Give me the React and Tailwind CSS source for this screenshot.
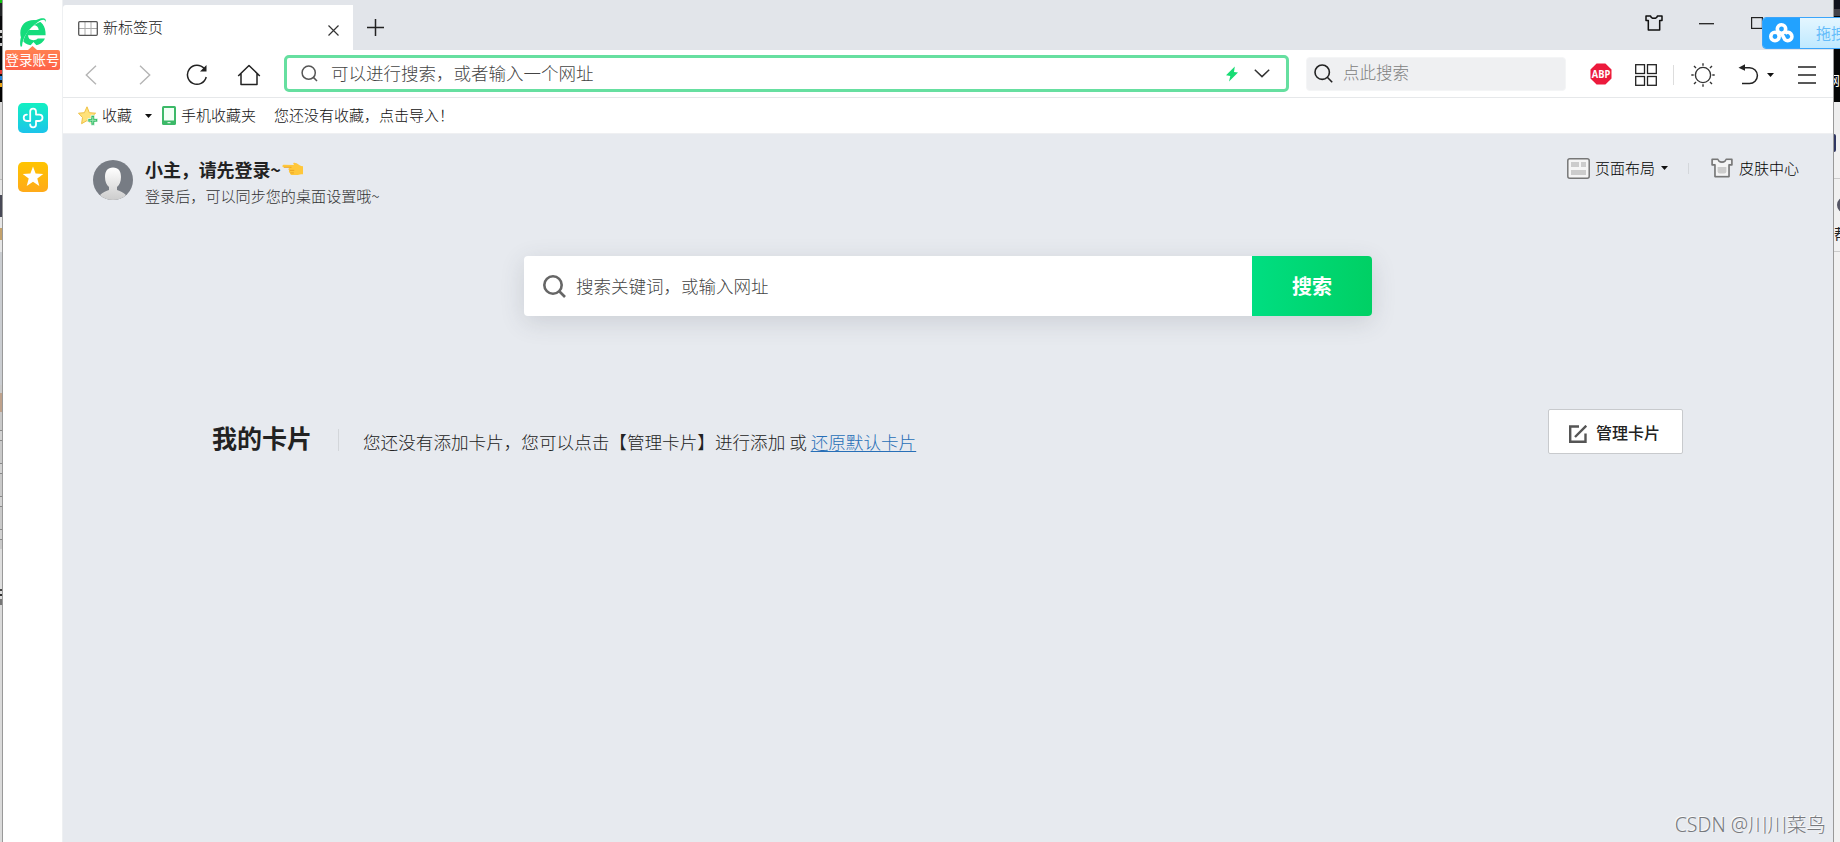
import React from 'react';

const Caret = () => (
  <svg className="w-[7px] h-[4px] shrink-0" viewBox="0 0 7 4"><path d="M0 0h7L3.5 4z" fill="#111" /></svg>
);

const Shirt = ({ className, stroke, width, children }) => (
  <svg className={className} viewBox="0 0 20 18" fill="none">
    <path d="M1 1.2h5.2q.5 2.5 3.8 2.5t3.8-2.5H19v5h-2.6V16.8H3.6V6.2H1z" stroke={stroke} strokeWidth={width} strokeLinejoin="round" />
    {children}
  </svg>
);

// slices of the windows that stay visible behind the browser
const leftSlices = [
  'h-[3px] bg-[#12c512]', 'h-[13px] bg-[#222527]', 'h-[14px] bg-[#08090b]', 'h-[3px] bg-[#d8d8d8]', 'h-[3px] bg-[#111]',
  'h-[2px] bg-[#bbb]', 'h-[5px] bg-[#08090c]', 'h-[3px] bg-[#ccc]', 'h-[24px] bg-[#08090c]', 'h-[4px] bg-[#e43a32]',
  'h-[2px] bg-[#111]', 'h-[4px] bg-[#2585dc]', 'h-[3px] bg-[#111]', 'h-[4px] bg-[#e8a315]', 'h-[15px] bg-[#020202]',
  'h-[77px] bg-[#d9d9d9]', 'h-px bg-[#bbb]', 'h-[15px] bg-[#e6e6e6]', 'h-[22px] bg-[#484956]', 'h-[11px] bg-[#e6e6e6]',
  'h-[12px] bg-[#c4a26c]', 'h-[12px] bg-[#e6e6e6]', 'h-[133px] bg-[#cacdd1]', 'h-[8px] bg-[#cacaca]',
  'h-[19px] bg-[#bfa28c]', 'h-[18px] bg-[#c9c9c9]', 'h-px bg-[#888]', 'h-[9px] bg-[#d2d2d2]', 'h-px bg-[#888]',
  'h-[22px] bg-[#c9c9c9]', 'h-px bg-[#888]', 'h-[9px] bg-[#d2d2d2]', 'h-px bg-[#888]', 'h-[22px] bg-[#c9c9c9]',
  'h-px bg-[#888]', 'h-[9px] bg-[#d2d2d2]', 'h-px bg-[#888]', 'h-[22px] bg-[#c9c9c9]', 'h-px bg-[#888]',
  'h-[9px] bg-[#d2d2d2]', 'h-px bg-[#888]', 'h-[9px] bg-[#c9c9c9]', 'h-[40px] bg-[#dedede]', 'h-[2px] bg-[#444]',
  'h-[3px] bg-[#ddd]', 'h-[2px] bg-[#333]', 'h-[3px] bg-[#ddd]', 'h-[6px] bg-[#777]', 'grow bg-[#dadada]',
];

const Sidebar = () => (
  <aside className="w-[60px] shrink-0 flex flex-col items-center bg-white border-r border-[#eef0f2]">
    <svg className="mt-[17px] w-[30px] h-[30px] shrink-0" viewBox="0 0 30 30">
      <path d="M16 3C7.500 3 2.300 8.200 2.300 16c0 7.500 5 12.500 13 12.500 5.500 0 9.500-2.300 11.600-7h-7.200c-1 1.200-2.300 1.700-4.300 1.700-3.300 0-5.200-1.700-5.400-4.900h17.600C28 9.200 23.500 3 16 3zM10.200 13c.5-3 2.400-4.700 5.400-4.700 3.100 0 4.900 1.800 5.100 4.700z" fill="#14dc7c" />
      <path d="M27.500 7.500C29 3 26 2.500 21 4.500C11 8.500 4.500 18 3.500 30" fill="none" stroke="#fff" strokeWidth="1.600" />
      <path d="M27.500 5.500C29 1 25 .3 19.500 2.500C9 6.500 .5 18 2.500 29.500H4C4.500 21 10 12 20 5C24 2.300 27.500 1.800 27.500 5.500z" fill="#14dc7c" />
      <path d="M15.500 25l-4.500 5h9z" fill="#fff" />
    </svg>
    <svg className="w-[9px] h-[4px] -mt-px shrink-0" viewBox="0 0 9 4"><path d="M0 4L4.500 0 9 4z" fill="#ff8050" /></svg>
    <div className="w-[55px] h-[20px] shrink-0 rounded-[2px] bg-gradient-to-b from-[#ff8050] to-[#ff6148] text-white text-[13.5px] leading-[19px] text-center whitespace-nowrap font-normal">登录账号</div>
    <svg className="mt-[33px] w-[30px] h-[30px] shrink-0" viewBox="0 0 30 30">
      <defs>
        <linearGradient id="aqua" x1="0" y1="0" x2="0" y2="1"><stop stopColor="#12f0c2" /><stop offset="1" stopColor="#1cc4ea" /></linearGradient>
      </defs>
      <rect width="30" height="30" rx="5" fill="url(#aqua)" />
      <path d="M18 11.600V8.500a2.900 2.900 0 0 0-5.800 0V18H8.900a3.200 3.200 0 0 1 0-6.400M18 11.600h3.300a3.200 3.200 0 0 1 0 6.400H18v3.500a2.900 2.900 0 0 1-5.800 0" fill="none" stroke="#fff" strokeWidth="1.800" strokeLinecap="round" strokeLinejoin="round" />
    </svg>
    <svg className="mt-[29px] w-[30px] h-[30px] shrink-0" viewBox="0 0 30 30">
      <defs>
        <linearGradient id="amber" x1="0" y1="0" x2="0" y2="1"><stop stopColor="#ffc400" /><stop offset="1" stopColor="#ffaa1a" /></linearGradient>
      </defs>
      <rect width="30" height="30" rx="5" fill="url(#amber)" />
      <path d="M15 4.500l2.600 7.100 7.700.3-6 4.700 2 7.400-6.300-4.200-6.300 4.200 2-7.400-6-4.700 7.700-.3z" fill="#fff" />
    </svg>
  </aside>
);

const TabBar = () => (
  <div className="h-[50px] shrink-0 flex bg-[#e2e5ea]">
    <div className="mt-[5px] w-[290px] flex items-center bg-white pl-[15px] rounded-tl-[3px]">
      <svg className="w-[20px] h-[15px] mt-px" viewBox="0 0 20 15" fill="none">
        <path d="M1 7.500h18M7 1v13M13 1v13" stroke="#aaa" />
        <rect x=".7" y=".7" width="18.600" height="13.600" rx="1" stroke="#555" strokeWidth="1.300" />
      </svg>
      <span className="ml-[5px] -mt-[2px] text-[15px] leading-[20px] text-[#222]">新标签页</span>
      <svg className="ml-auto mr-[14px] mt-[5px] w-[11px] h-[11px]" viewBox="0 0 11 11"><path d="M.5.5l10 10M10.500.5l-10 10" stroke="#333" strokeWidth="1.200" /></svg>
    </div>
    <svg className="ml-[14px] mt-[19px] w-[17px] h-[17px]" viewBox="0 0 17 17"><path d="M8.500 0v17M0 8.500h17" stroke="#222" strokeWidth="1.500" /></svg>
    <div className="ml-auto flex items-start">
      <Shirt className="mt-[15px] w-[18px] h-[16px]" stroke="#111" width="1.700" />
      <svg className="ml-[36px] mt-[23px] w-[15px] h-[2px]" viewBox="0 0 15 2"><path d="M0 .7h15" stroke="#222" strokeWidth="1.300" /></svg>
      <svg className="ml-[37px] mt-[17px] mr-[70px] w-[12px] h-[12px]" viewBox="0 0 12 12"><rect x=".6" y=".6" width="10.800" height="10.800" fill="none" stroke="#222" strokeWidth="1.200" /></svg>
    </div>
  </div>
);

const Toolbar = () => (
  <div className="h-[48px] shrink-0 flex items-center bg-white border-b border-[#e6e8ea]">
    <svg className="ml-[22px] mt-[2px] w-[12px] h-[20px]" viewBox="0 0 12 20" fill="none"><path d="M11 .8L1.300 10l9.700 9.200" stroke="#b5b5b5" strokeWidth="1.400" /></svg>
    <svg className="ml-[42px] mt-[2px] w-[12px] h-[20px]" viewBox="0 0 12 20" fill="none"><path d="M1 .8L10.700 10 1 19.200" stroke="#b5b5b5" strokeWidth="1.400" /></svg>
    <svg className="ml-[34px] mt-[3px] w-[24px] h-[22px]" viewBox="0 0 24 22" fill="none">
      <path d="M19.200 4.600A9.500 9.500 0 1 0 21.200 13" stroke="#222" strokeWidth="1.500" />
      <path d="M21.500 1v6.500h-6.500z" fill="#222" />
    </svg>
    <svg className="ml-[28px] mt-[3px] w-[24px] h-[22px]" viewBox="0 0 24 22" fill="none" stroke="#222" strokeWidth="1.500">
      <path d="M1.200 12L12 1.500 22.800 12M4 9.700V20.500H20V9.700" strokeLinejoin="round" />
    </svg>
    <div className="ml-[23px] w-[1005px] h-[37px] flex items-center rounded-[5px] border-[3px] border-[#66dfa0] pl-[14px]">
      <svg className="w-[17px] h-[17px]" viewBox="0 0 17 17" fill="none" stroke="#555" strokeWidth="1.500"><circle cx="7.700" cy="7.700" r="6.600" /><path d="M12.400 12.400l3.600 3.600" /></svg>
      <span className="ml-[13px] -mt-[2px] text-[17.5px] leading-[24px] text-[#444]">可以进行搜索，或者输入一个网址</span>
      <svg className="ml-auto w-[12px] h-[16px]" viewBox="0 0 12 16"><path d="M8.800.5L0 9.200l4.300.7L3 15.500 12 6.600l-4-.6z" fill="#18dc74" /></svg>
      <svg className="ml-[16px] mr-[16px] w-[16px] h-[9px]" viewBox="0 0 16 9" fill="none"><path d="M.8.8L8 7.600 15.200.8" stroke="#333" strokeWidth="1.500" /></svg>
    </div>
    <div className="ml-[17px] w-[260px] h-[34px] flex items-center rounded-[4px] border border-[#f4f5f6] bg-[#eff0f2] pl-[7px]">
      <svg className="w-[19px] h-[19px] -mt-px" viewBox="0 0 19 19" fill="none" stroke="#222" strokeWidth="1.600"><circle cx="8.200" cy="8.200" r="7.200" /><path d="M13.300 13.300l4.900 4.900" /></svg>
      <span className="ml-[10px] -mt-[3px] text-[16.5px] leading-[24px] text-[#808080]">点此搜索</span>
    </div>
    <svg className="ml-[24px] mt-px w-[22px] h-[22px]" viewBox="0 0 22 22">
      <path d="M6.600.5h8.800l6.100 6.100v8.800l-6.100 6.100H6.600L.5 15.400V6.600z" fill="#ec1a3c" />
      <text x="11" y="14.600" textAnchor="middle" textLength="18.500" lengthAdjust="spacingAndGlyphs" fontFamily="Open Sans, sans-serif" fontSize="10" fontWeight="700" fill="#fff">ABP</text>
    </svg>
    <svg className="ml-[23px] mt-[2px] w-[22px] h-[22px]" viewBox="0 0 22 22" fill="none" stroke="#222" strokeWidth="1.300">
      <rect x=".7" y=".7" width="8.800" height="8.800" /><rect x="12.500" y=".7" width="8.800" height="8.800" />
      <rect x=".7" y="12.500" width="8.800" height="8.800" /><rect x="12.500" y="12.500" width="8.800" height="8.800" />
    </svg>
    <div className="ml-[16px] mt-[2px] w-px h-[20px] bg-[#ddd]" />
    <svg className="ml-[17px] mt-[2px] w-[24px] h-[24px]" viewBox="0 0 24 24" fill="none" stroke="#333" strokeWidth="1.400">
      <circle cx="12" cy="12" r="7.600" />
      <path d="M12 .3v2.400M12 21.300v2.400M.3 12h2.400M21.300 12h2.400M3 3l2 2M19 19l2 2M21 3l-2 2M5 19l-2 2" />
    </svg>
    <svg className="ml-[23px] mt-[2px] w-[21px] h-[21px]" viewBox="0 0 21 21" fill="none">
      <path d="M5 3.700h6.500a7.900 7.900 0 0 1 0 15.800H4" stroke="#222" strokeWidth="1.500" /><path d="M.5 3.700L7 .3v6.500z" fill="#222" />
    </svg>
    <div className="ml-[8px] mt-[3px]"><Caret /></div>
    <svg className="ml-[24px] mt-[3px] w-[18px] h-[18px]" viewBox="0 0 18 18"><path d="M0 1h18M0 9h18M0 17h18" stroke="#222" strokeWidth="1.400" /></svg>
  </div>
);

const BookmarkBar = () => (
  <div className="h-[36px] shrink-0 flex items-center bg-white pl-[15px] border-b border-[#eff0f2] text-[15px] leading-[20px] text-[#111]">
    <svg className="w-[20px] h-[20px]" viewBox="0 0 20 20">
      <path d="M9 .8l2.300 5.900 6.300.5-4.700 4.300 1.400 6.500L9 14.600 3.600 17.700 4.500 11.500.5 7.200l5.900-.5z" fill="#ffe27a" stroke="#eec046" strokeLinejoin="round" />
      <path d="M13 9.300h3.600v3.200h3.100v3.600h-3.100v3.100H13v-3.100H9.900v-3.600H13z" fill="#35bd67" stroke="#fff" strokeWidth=".7" />
      <path d="M14.800 11v6.600M11.500 14.300h6.600" stroke="#9ce5b4" />
    </svg>
    <span className="ml-[4px] -mt-[2px]">收藏</span>
    <div className="ml-[13px]"><Caret /></div>
    <svg className="ml-[10px] w-[14px] h-[19px]" viewBox="0 0 14 19"><rect x="0" y="0" width="14" height="19" rx="1.500" fill="#3cb968" /><path d="M2 2h10v12.500H2z" fill="#f1fff5" /><path d="M5.500 16.700h3" stroke="#fff" /></svg>
    <span className="ml-[5px] -mt-[2px]">手机收藏夹</span>
    <span className="ml-[18px] -mt-[2px]">您还没有收藏，点击导入！</span>
  </div>
);

const Profile = () => (
  <div className="flex">
    <svg className="mt-[3px] w-[40px] h-[40px]" viewBox="0 0 40 40">
      <defs>
        <linearGradient id="bust" x1="0" y1="0" x2="0" y2="1"><stop stopColor="#fff" /><stop offset="1" stopColor="#ccc" /></linearGradient>
        <clipPath id="round"><circle cx="20" cy="20" r="20" /></clipPath>
      </defs>
      <circle cx="20" cy="20" r="20" fill="#777c84" />
      <path clipPath="url(#round)" d="M20 7.500c5.500 0 8 3.800 8 9.500 0 4.500-1.500 8-4 10v3c2.500 1 6 2 8.500 4.500V40h-25v-5.500C10 32 13.500 31 16 30v-3c-2.500-2-4-5.500-4-10 0-5.700 2.500-9.500 8-9.500z" fill="url(#bust)" />
    </svg>
    <div className="ml-[12px] -mt-px">
      <div className="flex items-center text-[18px] leading-[26px] font-bold text-[#222]">
        <span className="tracking-[-0.1px]">小主，请先登录~</span>
        <svg className="ml-[1px] w-[21px] h-[14px]" viewBox="0 0 21 14">
          <path d="M1.500 2.800C0 3.300 0 5.400 1.700 5.400H8c-2 .8-2 2.300-.6 3-.9 1-.5 2.200.7 2.500-.2 1.500.9 2.100 2.400 2.100h5.300c1.700 0 2.600-.8 5.200-.7V4.300c-2.600 0-4.300-1.800-6.400-3C12.500.2 10.500.5 11.500 2.300l.7.700z" fill="#ffc73a" />
          <path d="M2 5.300h7.500M7.600 8.400h4.600M8.300 10.900h3.600" stroke="#e69a20" strokeWidth=".8" fill="none" />
        </svg>
      </div>
      <div className="text-[15.1px] leading-[27px] text-[#333]">登录后，可以同步您的桌面设置哦~</div>
    </div>
  </div>
);

const PageTools = () => (
  <div className="h-[22px] flex items-center text-[15px] leading-[22px] text-black">
    <svg className="w-[23px] h-[21px]" viewBox="0 0 23 21">
      <rect x=".8" y=".8" width="21.400" height="19.400" rx="2" fill="#f5f5f5" stroke="#777" strokeWidth="1.500" />
      <path d="M4 4h8v5H4zM14 4h5v5h-5zM4 12h15v5H4z" fill="#ccc" />
    </svg>
    <span className="ml-[5px]">页面布局</span>
    <div className="ml-[6px]"><Caret /></div>
    <div className="ml-[20px] w-px h-[11px] bg-[#d4d7db]" />
    <Shirt className="ml-[22px] w-[22px] h-[20px]" stroke="#777" width="1.500">
      <path d="M2 2h4q1 3 4 3t4-3h4v3h-2.600v10.800H4.600V5H2z" fill="#f5f5f5" />
      <path d="M6 8h8v4q0 2-2 2H8q-2 0-2-2z" fill="#ccc" />
    </Shirt>
    <span className="ml-[6px]">皮肤中心</span>
  </div>
);

const Cards = () => (
  <section className="mt-[93px] h-[46px] flex items-start pl-[149px] pr-[150px]">
    <h2 className="mt-[9px] text-[25px] leading-[38px] font-bold text-[#222]">我的卡片</h2>
    <div className="mt-[20px] ml-[26px] w-px h-[22px] bg-[#d3d6da]" />
    <p className="mt-[20px] ml-[24px] text-[17.6px] leading-[26px] text-[#222]">
      您还没有添加卡片，您可以点击【管理卡片】进行添加 或 <a className="text-[#286fb7] underline underline-offset-2">还原默认卡片</a>
    </p>
    <button className="ml-auto w-[135px] h-[45px] flex items-center rounded-[2px] border border-[#c8cacd] bg-white pl-[20px] text-[16px] leading-[24px] font-medium text-[#222]">
      <svg className="mt-[4px] w-[18px] h-[18px]" viewBox="0 0 18 18" fill="none" stroke="#555" strokeWidth="2.400"><path d="M10 1.500H1.200v15.300h15.300V8.500M6 12L17.300.7" /></svg>
      <span className="ml-[9px]">管理卡片</span>
    </button>
  </section>
);

const RightEdge = () => (
  <div className="w-[7px] shrink-0 flex flex-col overflow-hidden bg-[#f1f1f1] border-l border-[#999]">
    <div className="h-[9px] shrink-0 bg-[#10121c]" />
    <div className="h-[7px] shrink-0 bg-[#444249]" />
    <div className="h-[56px] shrink-0 bg-[#050606]" />
    <div className="h-[30px] shrink-0 bg-[#050606] text-white text-[13px] font-normal leading-[15px] flex justify-end">网</div>
    <div className="h-[32px] shrink-0 bg-[#eee]" />
    <div className="w-[2px] h-[18px] shrink-0 rounded-r-full bg-[#303762]" />
    <div className="h-[27px] shrink-0 border-b border-[#ccc]" />
    <div className="mt-[18px] ml-[3px] w-[16px] h-[16px] shrink-0 rounded-full border-[3px] border-[#555665]" />
    <div className="mt-[11px] h-[28px] shrink-0 border-b border-[#ccc] text-[#222] text-[15px] font-normal leading-[20px]">帮</div>
  </div>
);

const App = () => {
  return (
    <div className="relative w-[1840px] h-[842px] flex overflow-hidden bg-white font-light font-['Noto_Sans_CJK_SC','Noto_Sans',sans-serif] whitespace-nowrap">
      <div className="w-[3px] shrink-0 flex flex-col border-r border-[#999]">
        {leftSlices.map((slice, index) => (
          <div key={index} className={`shrink-0 ${slice}`} />
        ))}
      </div>
      <Sidebar />
      <div className="w-[1770px] shrink-0 flex flex-col">
        <TabBar />
        <Toolbar />
        <BookmarkBar />
        <main className="grow bg-[#e7eaef]">
          <div className="h-[122px] flex justify-between pl-[30px] pr-[34px] pt-[23px]">
            <Profile />
            <PageTools />
          </div>
          <div className="mx-auto w-[848px] h-[60px] flex items-center rounded-[4px] bg-white shadow-[0_6px_24px_rgba(60,70,80,0.16)]">
            <svg className="ml-[19px] w-[23px] h-[23px]" viewBox="0 0 23 23" fill="none" stroke="#666" strokeWidth="2.600"><circle cx="10" cy="10" r="8.700" /><path d="M16 16l6 6" /></svg>
            <span className="ml-[10px] text-[17.5px] leading-[26px] text-[#444]">搜索关键词，或输入网址</span>
            <button className="ml-auto w-[120px] h-[60px] rounded-r-[4px] bg-gradient-to-r from-[#00de81] to-[#00d064] text-[20px] font-bold text-white">搜索</button>
          </div>
          <Cards />
        </main>
      </div>
      <RightEdge />

      {/* Floating upload widget */}
      <div className="absolute left-[1762px] top-[17px] w-[90px] h-[32px] flex rounded-[4px] border border-[#3ba5fb] bg-gradient-to-b from-[#e4f6ff] to-[#bfe9ff] overflow-hidden">
        <div className="w-[37px] shrink-0 bg-[#22a2ff] flex items-center justify-center">
          <svg className="w-[25px] h-[20px]" viewBox="0 0 25 20" fill="none" stroke="#fff" strokeWidth="3.600">
            <circle cx="12.500" cy="6" r="4.200" /><circle cx="6" cy="13.500" r="4.200" />
            <path d="M12.500 10.300l3.300 6.200a4.200 4.200 0 1 0 .2-6.200" />
          </svg>
        </div>
        <span className="ml-[16px] text-[15px] leading-[30px] font-normal text-[#64bcfa]">拖拽</span>
      </div>

      {/* Watermark */}
      <div className="absolute right-[14px] bottom-[2px] text-[19.5px] leading-[30px] text-[#77797d] [text-shadow:-1px_-1px_0_#fafafa] font-['Noto_Sans','Noto_Sans_CJK_SC',sans-serif]">CSDN @川川菜鸟</div>
    </div>
  );
};

export default App;
